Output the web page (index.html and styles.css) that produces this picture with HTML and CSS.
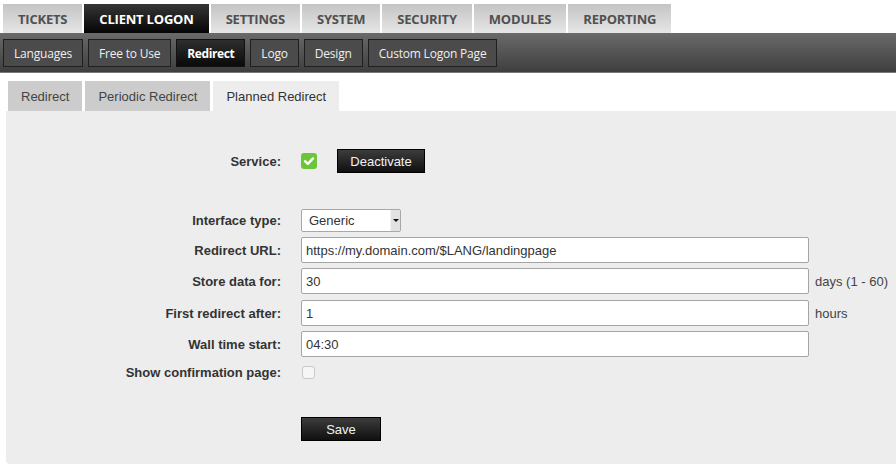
FILE: index.html
```html
<!DOCTYPE html>
<html>
<head>
<meta charset="utf-8">
<link rel="stylesheet" href="styles.css">
</head>
<body>
<nav class="topnav">
  <a class="ttab">TICKETS</a>
  <a class="ttab active">CLIENT LOGON</a>
  <a class="ttab">SETTINGS</a>
  <a class="ttab">SYSTEM</a>
  <a class="ttab">SECURITY</a>
  <a class="ttab">MODULES</a>
  <a class="ttab">REPORTING</a>
</nav>
<div class="subnav">
  <a class="sbtn">Languages</a>
  <a class="sbtn">Free to Use</a>
  <a class="sbtn active">Redirect</a>
  <a class="sbtn">Logo</a>
  <a class="sbtn">Design</a>
  <a class="sbtn">Custom Logon Page</a>
</div>
<div class="tabs">
  <a class="tab">Redirect</a>
  <a class="tab">Periodic Redirect</a>
  <a class="tab active">Planned Redirect</a>
</div>
<main class="panel">
  <div class="row row-service">
    <label class="lbl">Service:</label>
    <div class="ctl">
      <span class="check-on"><svg width="16" height="16" viewBox="0 0 16 16"><path d="M4 8.2 L6.8 10.8 L12 5.4" fill="none" stroke="#fff" stroke-width="2.4" stroke-linecap="round" stroke-linejoin="round"/></svg></span>
      <button class="btn btn-deact">Deactivate</button>
    </div>
  </div>
  <div class="row row-iface">
    <label class="lbl">Interface type:</label>
    <div class="ctl">
      <div class="select"><span class="sel-text">Generic</span><span class="sel-arrow"></span></div>
    </div>
  </div>
  <div class="row">
    <label class="lbl">Redirect URL:</label>
    <div class="ctl"><div class="input">https://my.domain.com/$LANG/landingpage</div></div>
  </div>
  <div class="row">
    <label class="lbl">Store data for:</label>
    <div class="ctl"><div class="input">30</div><span class="suffix">days (1 - 60)</span></div>
  </div>
  <div class="row row-gap6">
    <label class="lbl">First redirect after:</label>
    <div class="ctl"><div class="input">1</div><span class="suffix">hours</span></div>
  </div>
  <div class="row">
    <label class="lbl">Wall time start:</label>
    <div class="ctl"><div class="input">04:30</div></div>
  </div>
  <div class="row row-confirm">
    <label class="lbl">Show confirmation page:</label>
    <div class="ctl"><span class="check-off"></span></div>
  </div>
  <div class="row row-save">
    <span class="lbl"></span>
    <div class="ctl"><button class="btn btn-save">Save</button></div>
  </div>
</main>
</body>
</html>
```
FILE: styles.css
```css
* { box-sizing: border-box; }
body {
  margin: 0;
  background: #fff;
  font-family: "Liberation Sans", Arial, sans-serif;
}
a { text-decoration: none; cursor: default; }

.topnav {
  display: flex;
  gap: 2px;
  padding: 4px 0 0 3px;
  height: 33px;
}
.ttab {
  display: flex;
  align-items: center;
  justify-content: center;
  height: 29px;
  padding: 1px 15px 0;
  font-family: "Open Sans", sans-serif;
  font-weight: 700;
  font-size: 13px;
  letter-spacing: -0.2px;
  color: #505050;
  background: linear-gradient(#c4c4c4, #e6e6e6);
}
.ttab.active {
  color: #fff;
  background: linear-gradient(#363636, #050505);
}

.subnav {
  display: flex;
  gap: 5px;
  height: 40px;
  padding: 6px 0 0 3px;
  background: linear-gradient(#6a6a6a, #3e3e3e);
  border-bottom: 1px solid #7a7a7a;
}
.sbtn {
  display: flex;
  align-items: center;
  height: 28px;
  padding: 0 10px;
  font-family: "Open Sans", sans-serif;
  font-size: 12px;
  letter-spacing: -0.2px;
  color: #efefef;
  background: #4b4b4b;
  border: 1px solid #1f1f1f;
}
.sbtn.active {
  font-weight: 700;
  letter-spacing: -0.4px;
  color: #fff;
  background: linear-gradient(#2e2e2e, #0a0a0a);
  border-color: #111;
}

.tabs {
  display: flex;
  gap: 3px;
  margin: 8px 0 0 8px;
}
.tab {
  display: flex;
  align-items: center;
  height: 30px;
  padding: 0 13px;
  font-size: 13px;
  color: #444;
  background: #cccccc;
}
.tab.active {
  background: #ededed;
  color: #333;
}

.panel {
  margin-left: 6px;
  background: #ededed;
  border-bottom-left-radius: 4px;
  padding: 38px 0 23px 0;
  height: 353px;
}
.row {
  display: grid;
  grid-template-columns: 275px 1fr;
  column-gap: 20px;
  align-items: center;
  margin-top: 5px;
}
.row-service { margin-top: 0; height: 24px; }
.row-iface { margin-top: 36px; }
.row-gap6 { margin-top: 6px; }
.row-confirm { margin-top: 4px; height: 22px; }
.row-save { margin-top: 34px; }

.lbl {
  text-align: right;
  font-weight: 700;
  font-size: 13px;
  color: #333;
}
.ctl {
  display: flex;
  align-items: center;
}

.check-on {
  display: block;
  width: 16px;
  height: 16px;
  border-radius: 3px;
  background: #6cc63a;
}
.check-on svg { display: block; }
.check-off {
  display: block;
  width: 13px;
  height: 13px;
  margin-left: 1px;
  border: 1px solid #c8c8c8;
  border-radius: 3px;
  background: #f6f6f6;
}

.btn {
  font-family: "Liberation Sans", Arial, sans-serif;
  font-size: 13px;
  color: #f2f2f2;
  height: 24px;
  border: 1px solid #000;
  background: linear-gradient(#3c3c3c, #101010);
  padding: 0;
}
.btn-deact { width: 88px; margin-left: 20px; }
.btn-save { width: 80px; }

.select {
  display: flex;
  align-items: center;
  width: 100px;
  height: 23px;
  border: 1px solid #a8a8a8;
  border-radius: 2px;
  background: #fff;
  font-size: 13px;
  color: #333;
}
.sel-text { flex: 1; padding-left: 7px; }
.sel-arrow {
  position: relative;
  width: 10px;
  height: 21px;
  background: #e2e2e2;
  border-left: 1px solid #f4f4f4;
}
.sel-arrow::after {
  content: "";
  position: absolute;
  left: 2px;
  top: 9px;
  border-left: 3px solid transparent;
  border-right: 3px solid transparent;
  border-top: 3px solid #111;
}

.input {
  display: flex;
  align-items: center;
  width: 508px;
  height: 26px;
  padding: 0 4px;
  border: 1px solid #a5a5a5;
  border-radius: 2px;
  background: #fff;
  font-size: 13px;
  color: #333;
}
.suffix {
  margin-left: 6px;
  font-size: 13px;
  color: #444;
}
```
